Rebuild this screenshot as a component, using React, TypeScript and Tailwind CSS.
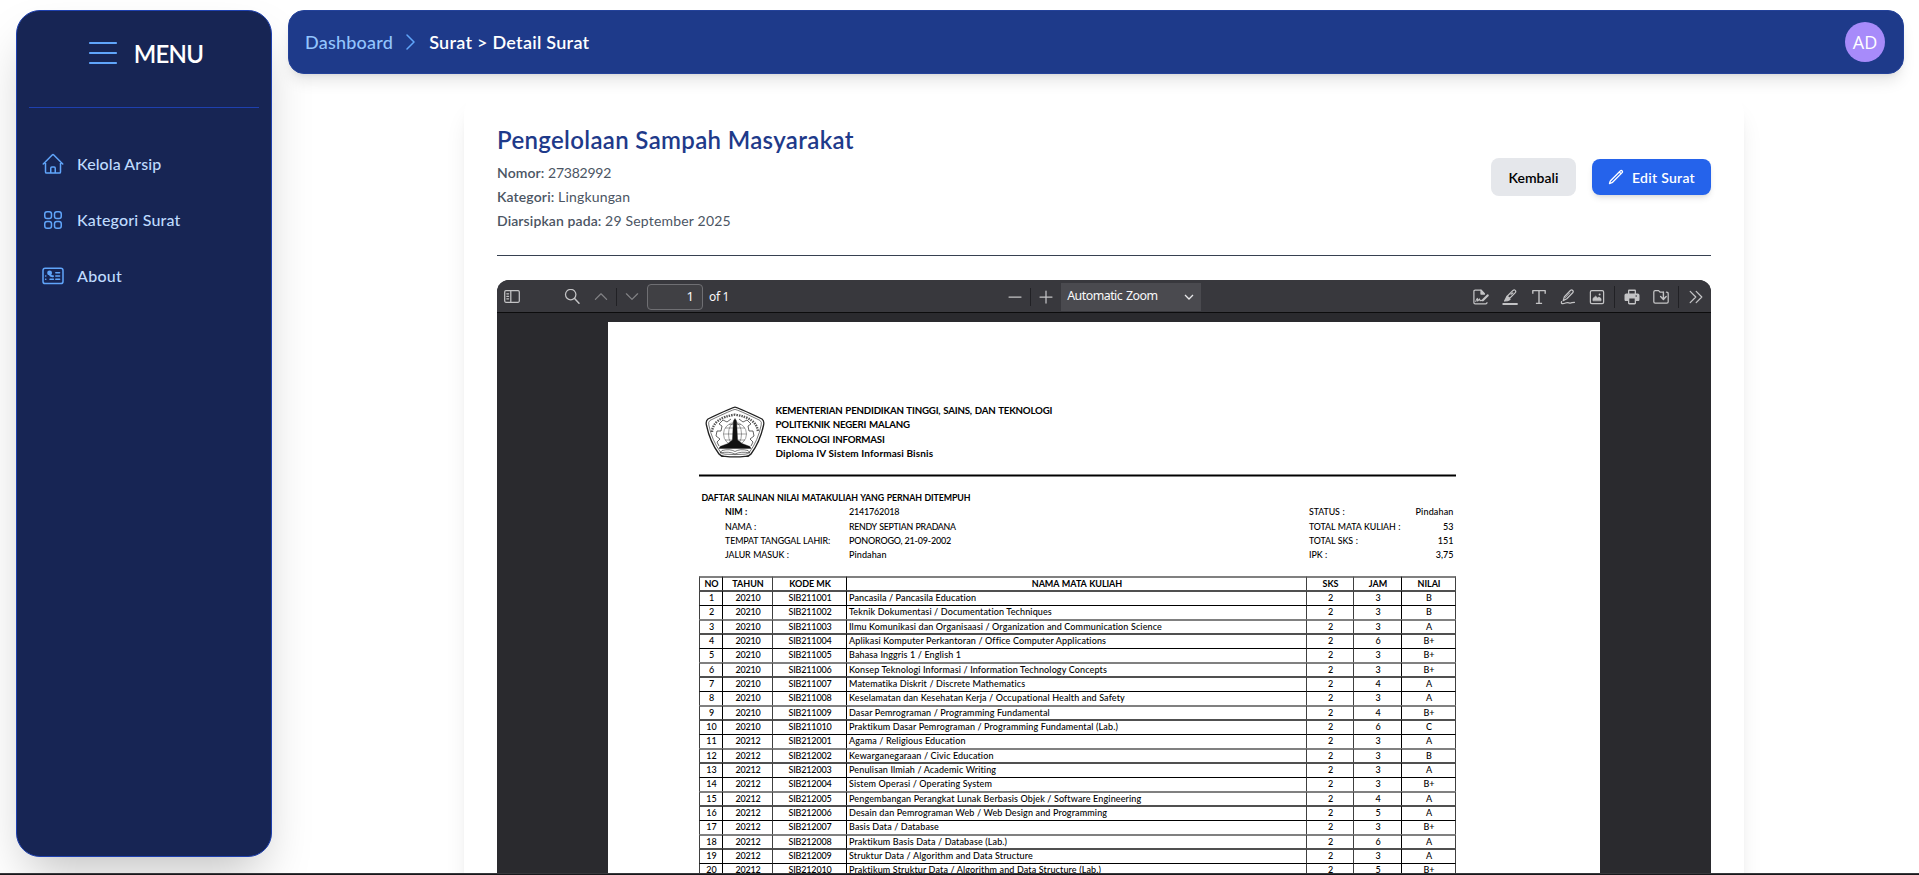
import React from 'react';
import { HiOutlineHome, HiOutlineSquares2X2, HiOutlinePencil } from 'react-icons/hi2';

type Course = [string, string, string, string, string];

const courses: Course[] = [
  ['20210', 'SIB211001', 'Pancasila / Pancasila Education', '3', 'B'],
  ['20210', 'SIB211002', 'Teknik Dokumentasi / Documentation Techniques', '3', 'B'],
  ['20210', 'SIB211003', 'Ilmu Komunikasi dan Organisaasi / Organization and Communication Science', '3', 'A'],
  ['20210', 'SIB211004', 'Aplikasi Komputer Perkantoran / Office Computer Applications', '6', 'B+'],
  ['20210', 'SIB211005', 'Bahasa Inggris 1 / English 1', '3', 'B+'],
  ['20210', 'SIB211006', 'Konsep Teknologi Informasi / Information Technology Concepts', '3', 'B+'],
  ['20210', 'SIB211007', 'Matematika Diskrit / Discrete Mathematics', '4', 'A'],
  ['20210', 'SIB211008', 'Keselamatan dan Kesehatan Kerja / Occupational Health and Safety', '3', 'A'],
  ['20210', 'SIB211009', 'Dasar Pemrograman / Programming Fundamental', '4', 'B+'],
  ['20210', 'SIB211010', 'Praktikum Dasar Pemrograman / Programming Fundamental (Lab.)', '6', 'C'],
  ['20212', 'SIB212001', 'Agama / Religious Education', '3', 'A'],
  ['20212', 'SIB212002', 'Kewarganegaraan / Civic Education', '3', 'B'],
  ['20212', 'SIB212003', 'Penulisan Ilmiah / Academic Writing', '3', 'A'],
  ['20212', 'SIB212004', 'Sistem Operasi / Operating System', '3', 'B+'],
  ['20212', 'SIB212005', 'Pengembangan Perangkat Lunak Berbasis Objek / Software Engineering', '4', 'A'],
  ['20212', 'SIB212006', 'Desain dan Pemrograman Web / Web Design and Programming', '5', 'A'],
  ['20212', 'SIB212007', 'Basis Data / Database', '3', 'B+'],
  ['20212', 'SIB212008', 'Praktikum Basis Data / Database (Lab.)', '6', 'A'],
  ['20212', 'SIB212009', 'Struktur Data / Algorithm and Data Structure', '3', 'A'],
  ['20212', 'SIB212010', 'Praktikum Struktur Data / Algorithm and Data Structure (Lab.)', '5', 'B+'],
];

const rowHeights = ['h-[14px]', 'h-[15px]', 'h-[14px]'];
const cellRules = [
  'border-t-2 border-t-[#808080] pb-[2px]',
  'border-t-2 border-t-[#505050] pb-[2px]',
  'border-t border-t-black pb-[2px]',
];

function TableRow({ index, cells, header = false }: { index: number; cells: string[]; header?: boolean }) {
  const rule = cellRules[index % 3];
  const cell = `flex h-full items-center justify-center border-l pl-px leading-none ${rule}`;
  return (
    <div
      className={`grid w-[757px] shrink-0 grid-cols-[23px_50px_74px_460px_47px_48px_55px] ${rowHeights[index % 3]} ${
        header ? 'font-bold tracking-[-0.05px]' : 'font-medium'
      }`}
    >
      <div className={`${cell} border-l-[#404040]`}>{cells[0]}</div>
      <div className={`${cell} border-l-black ${header ? '' : 'tracking-[-0.2px]'}`}>{cells[1]}</div>
      <div className={`${cell} border-l-[#404040] ${header ? '' : 'tracking-[-0.17px]'}`}>{cells[2]}</div>
      {header ? (
        <div className={`${cell} border-l-black [word-spacing:0.5px]`}>{cells[3]}</div>
      ) : (
        <div
          className={`flex h-full items-center whitespace-pre border-l border-l-black pl-[2px] leading-none tracking-[0.13px] ${rule}`}
        >
          {cells[3]}
        </div>
      )}
      <div className={`${cell} border-l-[#404040]`}>{cells[4]}</div>
      <div className={`${cell} border-l-[#404040]`}>{cells[5]}</div>
      <div className={`${cell} border-r border-l-black border-r-[#404040]`}>{cells[6]}</div>
    </div>
  );
}

function Emblem() {
  return (
    <svg width="60" height="52" viewBox="0 0 60 52" fill="none" stroke="#222">
      <path d="M30 1.2 Q32 1.2 57 13 Q59.5 15 58.6 19 Q55 36 46 48 Q44 50.6 40 50.4 Q30 51.4 20 50.4 Q16 50.6 14 48 Q5 36 1.4 19 Q.5 15 3 13 Q28 1.2 30 1.2Z" strokeWidth="1.3" />
      <path d="M30 3.4 Q32 3.4 55 14.4 Q57 16 56.2 19 Q53 34.5 44.6 46 Q43 48.2 40 48.2 Q30 49 20 48.2 Q17 48.2 15.4 46 Q7 34.5 3.8 19 Q3 16 5 14.4 Q28 3.4 30 3.4Z" strokeWidth=".6" />
      <path d="M7 26 Q8 12 30 8.6 Q52 12 53 26" strokeWidth="2.4" strokeDasharray="1.5 1" stroke="#555" />
      <path d="M14 40 L12 36 L15 33 L11 30 L12 25 L16 25 L17 20 L14 18 L18 14 L22 16 L26 13 M46 40 L48 36 L45 33 L49 30 L48 25 L44 25 L43 20 L46 18 L42 14 L38 16 L34 13" strokeWidth=".7" />
      <g strokeWidth=".5" stroke="#444">
        <circle cx="30" cy="28" r="11.5" />
        <ellipse cx="30" cy="28" rx="6.5" ry="11.5" />
        <path d="M18.5 28H41.5M20 22H40M20 34H40M24 18.5H36" />
      </g>
      <path d="M28.4 15L30 12.5L31.6 15L32.6 34L37 37.5L45 40.5L46 42.5H14L15 40.5L23 37.5L27.4 34Z" fill="#111" strokeWidth=".4" />
      <path d="M17 44.5Q25 42.5 30 45.5Q35 42.5 43 44.5L45 47Q36 45 30 48Q24 45 15 47Z" strokeWidth=".6" />
    </svg>
  );
}

function ToolIcon({ children, dim = false, solid = false }: { children: React.ReactNode; dim?: boolean; solid?: boolean }) {
  const tone = dim ? 'text-[#828285]' : 'text-[#c3c3c5]';
  return (
    <span className={`flex h-7 w-7 shrink-0 items-center justify-center ${tone}`}>
      <svg
        width="16"
        height="16"
        viewBox="0 0 16 16"
        fill={solid ? 'currentColor' : 'none'}
        stroke={solid ? 'none' : 'currentColor'}
        strokeWidth="1.25"
        strokeLinecap="round"
        strokeLinejoin="round"
      >
        {children}
      </svg>
    </span>
  );
}

const Separator = () => <span className="h-[18px] w-px shrink-0 bg-[#212125]" />;
const TallSeparator = () => <span className="mx-[2px] h-[22px] w-px shrink-0 bg-[#212125]" />;

function ViewerToolbar() {
  return (
    <div className="flex h-8 items-center bg-[#38383d] pt-px font-['Noto_Sans',sans-serif] text-[12px] text-[#f9f9fa]">
      <div className="ml-px flex items-center">
        <ToolIcon>
          <rect x=".7" y="1.7" width="14.6" height="11.6" rx="1.2" />
          <path d="M6.8 2V13M2.8 4.8H4.6M2.8 7.3H4.6M2.8 9.8H4.6" />
        </ToolIcon>
        <span className="w-8" />
        <ToolIcon>
          <circle cx="6.7" cy="5.6" r="5.2" />
          <path d="M10.6 9.6L15 14.2" strokeWidth="1.5" />
        </ToolIcon>
        <span className="w-px" />
        <ToolIcon dim>
          <path d="M2.4 10.4L8 4.8L13.6 10.4" />
        </ToolIcon>
        <span className="ml-px" />
        <Separator />
        <span className="w-px" />
        <ToolIcon dim>
          <path d="M2.4 4.8L8 10.4L13.6 4.8" />
        </ToolIcon>
        <span className="ml-px flex h-[26px] w-[56px] items-center justify-end rounded-sm border border-[#6f6f73] bg-[#404044] pr-2 text-[13px]">
          1
        </span>
        <span className="ml-1.5 tracking-[-0.3px]">of 1</span>
      </div>
      <div className="ml-[272px] flex items-center">
        <ToolIcon>
          <path d="M2 8H14" />
        </ToolIcon>
        <span className="w-px" />
        <Separator />
        <span className="w-px" />
        <ToolIcon>
          <path d="M2 8H14M8 2V14" />
        </ToolIcon>
        <span className="ml-px flex h-7 w-[140px] items-center justify-between bg-[#4a4a4f] pl-1.5 pr-[7px]">
          <span className="text-[12.4px] tracking-[-0.52px] [word-spacing:1px]">Automatic Zoom</span>
          <svg width="10" height="10" viewBox="0 0 10 10" fill="none" stroke="#e8e8ea" strokeWidth="1.3">
            <path d="M1 3L5 7L9 3" />
          </svg>
        </span>
      </div>
      <div className="ml-auto mr-px flex items-center gap-px">
        <ToolIcon>
          <path d="M14 13.5C14 14.3 13.6 14.8 12.6 14.8H2.2C1.2 14.8 .9 14.3 .9 13.5V2.4C.9 1.6 1.2 1.2 2.2 1.2H8L11 4.5" />
          <path d="M8 1.2V5H11.5Z" fill="currentColor" />
          <path d="M2.8 12.4C4 8.5 4.6 8.5 4.6 12L6.5 10L7.2 11.8L9 11.4" strokeWidth="1.1" />
          <path d="M9.8 11.3L14.6 6.4" strokeWidth="2.2" />
        </ToolIcon>
        <ToolIcon>
          <path d="M1.2 15H15" strokeWidth="1.8" />
          <path d="M5.2 7.2L11 1.4C11.8 .8 12.6.8 13.2 1.4C13.9 2.1 13.9 2.9 13.3 3.6L7.6 9.4Z" />
          <path d="M5 7.4L8 10.4L5.5 11.6L2.6 12Z" fill="currentColor" />
          <path d="M9 5.2L10.8 3.9" />
        </ToolIcon>
        <ToolIcon>
          <path d="M1.8 4V1.6H14.2V4M8 1.6V14.4M5.6 14.4H10.4" strokeWidth="1.4" strokeLinecap="square" />
        </ToolIcon>
        <ToolIcon>
          <path d="M3.2 11.6L4.4 7.6L10.4 1.5C11.2.8 12 .8 12.7 1.5C13.4 2.2 13.4 3 12.7 3.8L6.8 9.8Z" />
          <path d="M5.2 8.6L9.6 4" strokeWidth="1" />
          <path d="M1.6 12.6C.6 15 3 15.2 5.5 14C8.5 12.6 9.6 15.2 12 13.6L14.5 13.4" />
        </ToolIcon>
        <ToolIcon>
          <rect x="1.4" y="1.6" width="13.2" height="13" rx="1.4" />
          <path d="M4 11.4V9.4L6.6 7.2L8.6 9L10 8L12 9.6V11.4Z" fill="currentColor" strokeWidth=".8" />
          <circle cx="10.6" cy="5.4" r="1" fill="currentColor" stroke="none" />
        </ToolIcon>
        <TallSeparator />
        <ToolIcon solid>
          <path
            fillRule="evenodd"
            d="M5.4.6H10.6C11.5.6 12 1.1 12 2V4.4H13.6C14.8 4.4 15.5 5.2 15.5 6.3V10.4C15.5 11.3 14.9 12 14 12H12V14C12 14.9 11.5 15.4 10.6 15.4H5.4C4.5 15.4 4 14.9 4 14V12H2C1.1 12 .5 11.3.5 10.4V6.3C.5 5.2 1.2 4.4 2.4 4.4H4V2C4 1.1 4.5.6 5.4.6ZM5.3 1.9V4.4H10.7V1.9ZM5.3 9.4V14.1H10.7V9.4ZM12.2 6.2A.8.8 0 1 0 12.2 7.8A.8.8 0 1 0 12.2 6.2Z"
          />
        </ToolIcon>
        <ToolIcon>
          <path d="M9.6 3.2H7.2L5.6 1.6H2.2C1.2 1.6.8 2 .8 3V12.8C.8 13.8 1.2 14.2 2.2 14.2H13.8C14.8 14.2 15.2 13.8 15.2 12.8V4.8C15.2 3.6 14.8 3.2 13.4 3.2" />
          <path d="M10.4 3V10M7.6 7.6L10.4 10.4L13.2 7.6" strokeWidth="1.4" />
        </ToolIcon>
        <TallSeparator />
        <ToolIcon>
          <path d="M2.2 2.4L7.8 8L2.2 13.6M8.2 2.4L13.8 8L8.2 13.6" />
        </ToolIcon>
      </div>
    </div>
  );
}

function DocumentPage() {
  return (
    <div className="flex w-[992px] shrink-0 flex-col bg-white pl-[91px] pt-[81px] font-['Lato',sans-serif] text-[9px] text-black">
      <div className="flex h-[71px] w-[757px]">
        <div className="ml-[6px] mt-[3px]">
          <Emblem />
        </div>
        <div className="ml-[10.5px] whitespace-nowrap text-[10px] font-bold leading-[14.33px]">
          <div className="text-[9.7px] tracking-[-0.19px] [word-spacing:0.7px]">
            KEMENTERIAN PENDIDIKAN TINGGI, SAINS, DAN TEKNOLOGI
          </div>
          <div className="text-[9.7px] tracking-[-0.22px] [word-spacing:0.7px]">POLITEKNIK NEGERI MALANG</div>
          <div className="text-[9.7px] tracking-[-0.19px] [word-spacing:0.7px]">TEKNOLOGI INFORMASI</div>
          <div className="tracking-[0.1px]">Diploma IV Sistem Informasi Bisnis</div>
        </div>
      </div>
      <div className="h-[3px] w-[757px] border-y border-[#808080] bg-black" />
      <div className="mt-[13px] whitespace-nowrap pl-[2.5px] pt-px text-[8.8px] font-bold leading-[14.33px] tracking-[-0.12px] [word-spacing:0.7px]">
        DAFTAR SALINAN NILAI MATAKULIAH YANG PERNAH DITEMPUH
      </div>
      <div className="flex h-[71px] w-[757px] whitespace-nowrap font-medium leading-[14.33px]">
        <div className="w-[124px] pl-[26px] text-[8.8px] tracking-[-0.08px] [word-spacing:0.5px]">
          <div className="font-bold">NIM :</div>
          <div>NAMA :</div>
          <div>TEMPAT TANGGAL LAHIR:</div>
          <div>JALUR MASUK :</div>
        </div>
        <div className="w-[460px] pl-[26px]">
          <div className="tracking-[-0.2px]">2141762018</div>
          <div className="text-[8.8px] tracking-[-0.27px] [word-spacing:0.7px]">RENDY SEPTIAN PRADANA</div>
          <div className="tracking-[-0.2px]">PONOROGO, 21-09-2002</div>
          <div className="tracking-[0.1px]">Pindahan</div>
        </div>
        <div className="flex-1 pl-[26px] text-[8.8px] tracking-[-0.08px] [word-spacing:0.5px]">
          <div>STATUS :</div>
          <div>TOTAL MATA KULIAH :</div>
          <div>TOTAL SKS :</div>
          <div>IPK :</div>
        </div>
        <div className="pr-[2.5px] text-right">
          <div className="tracking-[0.15px]">Pindahan</div>
          <div>53</div>
          <div>151</div>
          <div>3,75</div>
        </div>
      </div>
      <TableRow index={0} header cells={['NO', 'TAHUN', 'KODE MK', 'NAMA MATA KULIAH', 'SKS', 'JAM', 'NILAI']} />
      {courses.map(([year, code, name, hours, grade], i) => (
        <TableRow key={code} index={i + 1} cells={[String(i + 1), year, code, name, '2', hours, grade]} />
      ))}
    </div>
  );
}

function AboutIcon() {
  return (
    <svg width="24" height="24" viewBox="0 0 24 24" fill="none" stroke="#60a5fa" strokeWidth="1.5" strokeLinecap="round" strokeLinejoin="round">
      <rect x="2" y="4.2" width="20" height="15.4" rx="2.2" />
      <path d="M14.8 8.8H18.6M14.8 12H18.6M14.8 15.2H18.6M9 15.2H12.4M4.6 12H4.8M4.6 15.2H4.8" />
      <circle cx="8.6" cy="8.9" r="1.7" fill="#60a5fa" />
      <path d="M8.8 10.6C9.2 12 10.2 12.4 12 12.2" strokeWidth="2" />
    </svg>
  );
}

function Sidebar() {
  return (
    <aside className="mt-[10px] flex h-[847px] w-64 shrink-0 flex-col rounded-3xl border border-[#1e40af] bg-[#172554] px-3 shadow-2xl">
      <div className="flex h-[97px] items-start justify-center border-b border-[#1e40af] pl-[3px] pt-[24px]">
        <div className="flex h-9 items-center gap-4">
          <svg width="30" height="30" viewBox="0 0 30 30" stroke="#60a5fa" strokeWidth="2.2" strokeLinecap="round">
            <path d="M2 5H28M2 15H28M2 25H28" />
          </svg>
          <span className="pt-px text-[24px] font-semibold leading-none tracking-[-0.8px] text-white">MENU</span>
        </div>
      </div>
      <nav className="mt-[32px] flex flex-col gap-2 text-[16px] font-medium text-[#bfdbfe]">
        <a className="flex h-12 items-center gap-3 pl-3 tracking-[0.08px]">
          <HiOutlineHome className="h-6 w-6 text-[#60a5fa]" />
          Kelola Arsip
        </a>
        <a className="flex h-12 items-center gap-3 pl-3 tracking-[0.2px]">
          <HiOutlineSquares2X2 className="h-6 w-6 text-[#60a5fa]" />
          Kategori Surat
        </a>
        <a className="flex h-12 items-center gap-3 pl-3 tracking-[0.26px]">
          <AboutIcon />
          About
        </a>
      </nav>
    </aside>
  );
}

export default function App() {
  return (
    <div className="flex h-[875px] flex-col overflow-hidden bg-white font-['Lato',sans-serif]">
      <div className="flex h-[873px] shrink-0 gap-4 overflow-hidden px-4 pr-[15px]">
        <Sidebar />
        <main className="flex min-w-0 flex-1 flex-col pt-[10px]">
          <header className="relative z-10 flex h-16 shrink-0 items-center rounded-2xl border border-[#24429a] bg-[#1e3a8a] pl-4 pr-[18px] text-[18px] shadow-lg">
            <span className="font-medium tracking-[0.23px] text-[#93c5fd]">Dashboard</span>
            <svg className="ml-[13px] mr-[14px]" width="9" height="16" viewBox="0 0 9 16" fill="none" stroke="#60a5fa" strokeWidth="1.5" strokeLinecap="round" strokeLinejoin="round">
              <path d="M1 1L8 8L1 15" />
            </svg>
            <span className="font-semibold tracking-[0.27px] text-white">Surat &gt; Detail Surat</span>
            <span className="ml-auto flex h-10 w-10 items-center justify-center rounded-full bg-[#a78bfa] font-['Open_Sans',sans-serif] text-[18px] text-white">
              AD
            </span>
          </header>
          <section className="ml-[176px] mt-4 flex w-[1280px] flex-1 flex-col rounded-3xl bg-white px-[33px] pt-[33px] shadow-xl">
            <div className="flex h-[133px] shrink-0 items-center justify-between border-b border-[#374151] pb-[24px]">
              <div className="flex flex-col pt-px">
                <h1 className="mb-[7px] text-[24px] font-semibold leading-8 tracking-[0.34px] text-[#1e3a8a]">
                  Pengelolaan Sampah Masyarakat
                </h1>
                <div className="flex flex-col gap-1 text-[14px] leading-5 text-[#4b5563]">
                  <p>
                    <b className="font-semibold tracking-[0.1px]">Nomor:</b>{' '}
                    <span className="tracking-[-0.25px]">27382992</span>
                  </p>
                  <p>
                    <b className="font-semibold tracking-[0.13px]">Kategori:</b>{' '}
                    <span className="tracking-[0.18px]">Lingkungan</span>
                  </p>
                  <p>
                    <b className="font-semibold tracking-[0.11px]">Diarsipkan pada:</b>{' '}
                    <span className="tracking-[0.19px]">29 September 2025</span>
                  </p>
                </div>
              </div>
              <div className="flex items-center gap-4 text-[14px] font-semibold">
                <button className="flex h-[38px] w-[85px] items-center justify-center rounded-lg bg-[#e5e7eb] text-black">
                  Kembali
                </button>
                <button className="flex h-9 w-[119px] items-center justify-center gap-2 rounded-lg bg-[#2563eb] tracking-[0.28px] text-white shadow-md">
                  <HiOutlinePencil className="h-4 w-4" strokeWidth={2} />
                  Edit Surat
                </button>
              </div>
            </div>
            <div className="mt-6 flex h-[700px] shrink-0 flex-col overflow-hidden rounded-xl bg-[#2a2a2e]">
              <ViewerToolbar />
              <div className="flex flex-1 justify-center overflow-hidden border-t border-[#0c0c0d] pt-[9px]">
                <DocumentPage />
              </div>
            </div>
          </section>
        </main>
      </div>
      <div className="h-0.5 shrink-0 border-t border-[#38383c] bg-[#18181b]" />
    </div>
  );
}
